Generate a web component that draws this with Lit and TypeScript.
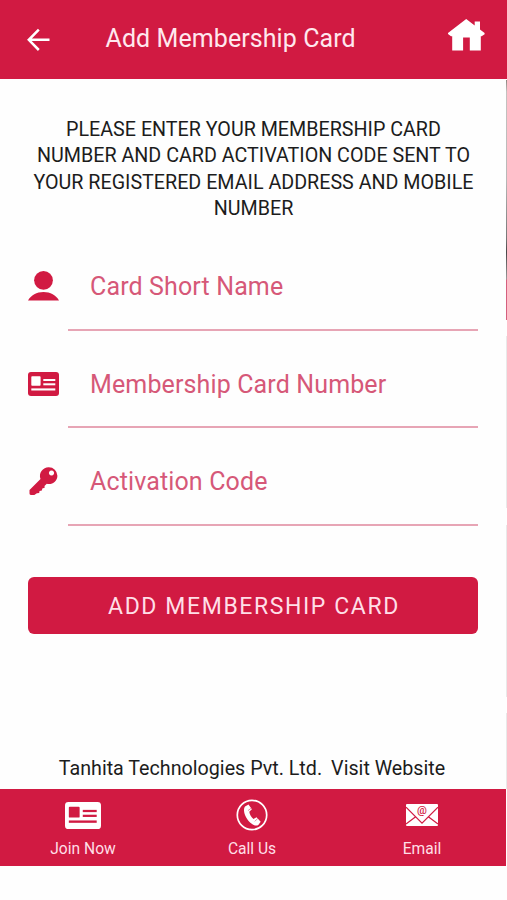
import { LitElement, html, css, svg } from "lit";
import { customElement } from "lit/decorators.js";

const backIcon = html`<svg width="24" height="24" viewBox="0 0 24 24" fill="none" stroke="#fff" stroke-width="2.5">
  <path d="M23.500 11.800H3M12.800 1.600 2.800 11.800l10 10.200" />
</svg>`;

const homeIcon = html`<svg width="38" height="34" viewBox="0 0 38 34" fill="#fff">
  <path d="M19.2 1 27.7 7.6V3.6H33V11.5L37.6 15V16.2L34.6 18.2H33.8V32.6H22.8V19.500H16.1V32.6H5.2V18.2H4L1 16V15Z" />
</svg>`;

const personIcon = html`<svg width="31" height="32" viewBox="0 0 32 32" preserveAspectRatio="none" fill="#d11a42">
  <ellipse cx="16" cy="10.3" rx="9.7" ry="9.4" />
  <path d="M0 30.600C3 25 9 22 16 22s13 3 16 8.600Z" />
</svg>`;

const idCard = (fill: string, hole: string) => svg`
  <rect x="0" y="0" width="31" height="24" rx="3" fill=${fill} />
  <g fill=${hole}>
    <rect x="3.300" y="4.200" width="9.300" height="9.600" rx=".8" />
    <rect x="15.300" y="7" width="12" height="2" />
    <rect x="15.300" y="11.300" width="12" height="2" />
    <rect x="3.300" y="16.400" width="24" height="2.100" />
  </g>`;

const cardIcon = html`<svg width="31" height="24" viewBox="0 0 31 24" preserveAspectRatio="none">
  ${idCard("#d11a42", "#fff")}
</svg>`;

const keyIcon = html`<svg class="key" width="30" height="30" viewBox="0 0 30 30">
  <path
    fill="#d11a42"
    fill-rule="evenodd"
    d="M19.800 1.300a8.600 8.600 0 0 1 8.600 8.400c0 4.700-3.900 8.300-8.600 8.300-.7 0-1.400-.1-2-.3l-2.300 2.300.2 1.700-2.400.8-.4 1.900-2.400.5-.3 2-2.300.4L5.300 29H1.900Q.4 28.700.5 27.500V24L11.500 13a8.600 8.600 0 0 1 8.300-11.700ZM22.500 4.400a2.600 2.600 0 1 0 .01 0Z"
  />
</svg>`;

const joinIcon = html`<svg width="36" height="27" viewBox="0 0 31 24" preserveAspectRatio="none">
  ${idCard("#fff", "#d11a42")}
</svg>`;

const phoneIcon = html`<svg width="32" height="32" viewBox="0 0 32 32">
  <circle cx="16" cy="16" r="14.700" fill="none" stroke="#fff" stroke-width="1.700" />
  <path
    fill="#fff"
    d="M9 7.500 12.500 5.500l3.400 4.700-2.600 2.500c.3 2.800 2 5.500 4.200 7.300l3-1.700 4.200 4.500-2.400 3.300c-1.700 1-4.300.5-6.600-1.300C11.200 21.300 8.200 16.200 8 11.500c-.1-1.700.2-3.100 1-4Z"
  />
  <path d="m12 11.600 3.200-2.400M18.800 22.400l3-3" stroke="#d11a42" stroke-width=".5" />
</svg>`;

const mailIcon = html`<svg width="32" height="22" viewBox="0 0 32 22">
  <rect width="32" height="22" rx="1" fill="#fff" />
  <path d="M0 3.200 16 19.200 32 3.200M0 20 10 12.500M32 20 22 12.500" fill="none" stroke="#d11a42" stroke-width="1.200" />
</svg>`;

@customElement("app-root")
export class AppRoot extends LitElement {
  static styles = css`
    :host {
      display: flex;
      flex-direction: column;
      position: relative;
      width: 507px;
      height: 900px;
      background: #fefefe;
      font-family: Roboto, "Liberation Sans", sans-serif;
      color: #1c1c1c;
      overflow: hidden;
    }
    svg { display: block; flex: none; }
    * { box-sizing: border-box; }
    .bar {
      height: 79px;
      flex: none;
      display: flex;
      align-items: center;
      padding: 0 22px 3px 26px;
      background: #d11a42;
      color: #ffe8ee;
    }
    .back { padding-top: 3px; }
    .title {
      flex: 1;
      margin-left: 55.500px;
      padding-top: 1px;
      font-size: 25px;
      line-height: 30px;
      white-space: nowrap;
      letter-spacing: 0.08px;
    }
    .home { margin-top: -7px; }
    .intro {
      margin: 38px 0 0;
      height: 106px;
      text-align: center;
      font-size: 19.7px;
      line-height: 26.4px;
      white-space: nowrap;
    }
    .intro span { display: block; }
    .form { padding: 20px 29px 0 28px; }
    .field {
      display: grid;
      grid-template-columns: 40px 1fr;
      height: 97.500px;
    }
    .glyph {
      display: flex;
      align-items: center;
      width: 32px;
      height: 86px;
    }
    .key { margin-left: 1px; }
    .input {
      height: 87.500px;
      padding-left: 22px;
      border-bottom: 2px solid #e7a5b5;
      font-size: 25px;
      line-height: 87px;
      letter-spacing: 0.13px;
      color: #d65878;
      white-space: nowrap;
    }
    .submit {
      display: block;
      width: 450px;
      height: 57px;
      margin: 41px 0 0;
      padding: 2px 0 0 2px;
      border: 0;
      border-radius: 6px;
      background: #d11a42;
      color: #ffdfe7;
      font-family: inherit;
      font-size: 23px;
      line-height: 55px;
      letter-spacing: 1.6px;
      white-space: nowrap;
    }
    .company {
      display: flex;
      justify-content: center;
      gap: 9px;
      margin-top: auto;
      padding-right: 3px;
      height: 33px;
      font-size: 19.700px;
      line-height: 25px;
      white-space: nowrap;
    }
    .nav {
      display: grid;
      grid-template-columns: 166px 172px 168px;
      flex: none;
      height: 77px;
      width: 506px;
      margin-bottom: 34px;
      background: #d11a42;
      color: #ffdfe7;
    }
    .tab {
      display: flex;
      flex-direction: column;
      align-items: center;
      font-size: 15.600px;
      line-height: 20px;
    }
    .pic {
      position: relative;
      display: flex;
      align-items: center;
      height: 50px;
      padding-top: 2px;
    }
    .at {
      position: absolute;
      left: 0;
      right: 0;
      top: 16px;
      text-align: center;
      font-size: 11px;
      line-height: 12px;
      font-weight: 500;
      color: #d11a42;
    }
    .edge {
      position: absolute;
      right: 0;
      top: 80px;
      width: 1px;
      height: 709px;
      background: linear-gradient(
        #8c8580 0, #c4c2c0 12px, #b8b8b8 100px, #777 158px, #4a4648 172px, #999 199px,
        #d4607e 200px, #d4607e 240px, #fefefe 240px, #fefefe 256px,
        #e9e9e9 256px, #e9e9e9 428px, #fefefe 428px, #fefefe 445px,
        #e9e9e9 445px, #e9e9e9 617px, #fefefe 617px, #fefefe 633px, #e9e9e9 633px
      );
    }
  `;

  private fields = [
    { label: "Card Short Name", icon: personIcon },
    { label: "Membership Card Number", icon: cardIcon },
    { label: "Activation Code", icon: keyIcon },
  ];

  private tabs = [
    { label: "Join Now", icon: joinIcon, at: false },
    { label: "Call Us", icon: phoneIcon, at: false },
    { label: "Email", icon: mailIcon, at: true },
  ];

  private intro = [
    "PLEASE ENTER YOUR MEMBERSHIP CARD",
    "NUMBER AND CARD ACTIVATION CODE SENT TO",
    "YOUR REGISTERED EMAIL ADDRESS AND MOBILE",
    "NUMBER",
  ];

  render() {
    return html`
      <header class="bar">
        <div class="back">${backIcon}</div>
        <div class="title">Add Membership Card</div>
        <div class="home">${homeIcon}</div>
      </header>
      <p class="intro">${this.intro.map((line) => html`<span>${line}</span>`)}</p>
      <div class="form">
        ${this.fields.map(
          (f) => html`<div class="field">
            <div class="glyph">${f.icon}</div>
            <div class="input">${f.label}</div>
          </div>`
        )}
        <button class="submit">ADD MEMBERSHIP CARD</button>
      </div>
      <div class="company"><span>Tanhita Technologies Pvt. Ltd.</span><span>Visit Website</span></div>
      <nav class="nav">
        ${this.tabs.map(
          (t) => html`<div class="tab">
            <div class="pic">${t.icon}${t.at ? html`<span class="at">@</span>` : ""}</div>
            <div>${t.label}</div>
          </div>`
        )}
      </nav>
      <div class="edge"></div>
    `;
  }
}
